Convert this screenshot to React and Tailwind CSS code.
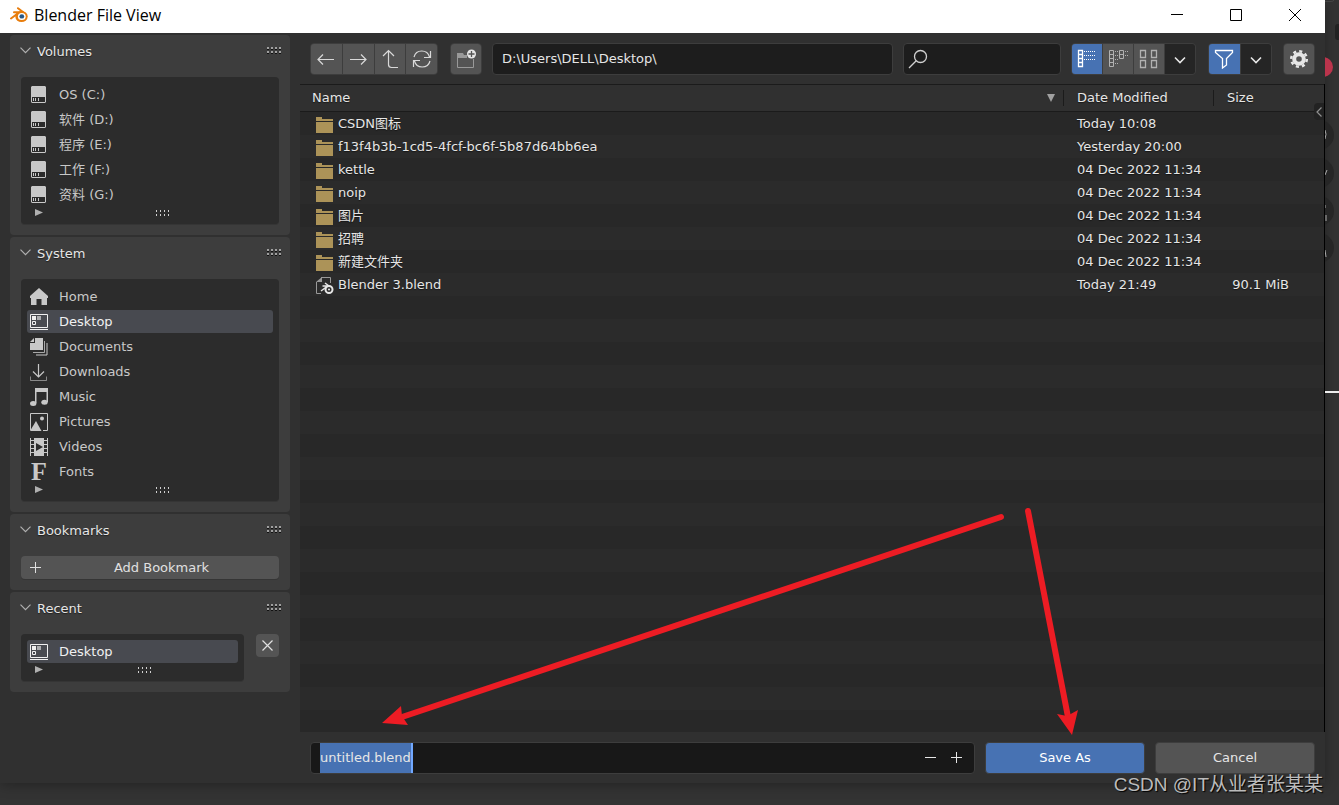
import { useState } from 'react'

const volumes = ['OS (C:)', '软件 (D:)', '程序 (E:)', '工作 (F:)', '资料 (G:)']

const files = [
  { name: 'CSDN图标', date: 'Today 10:08' },
  { name: 'f13f4b3b-1cd5-4fcf-bc6f-5b87d64bb6ea', date: 'Yesterday 20:00' },
  { name: 'kettle', date: '04 Dec 2022 11:34' },
  { name: 'noip', date: '04 Dec 2022 11:34' },
  { name: '图片', date: '04 Dec 2022 11:34' },
  { name: '招聘', date: '04 Dec 2022 11:34' },
  { name: '新建文件夹', date: '04 Dec 2022 11:34' },
  { name: 'Blender 3.blend', date: 'Today 21:49', size: '90.1 MiB', blend: true },
]

function Icon({ children }) {
  return (
    <svg width="18" height="18" viewBox="0 0 18 18" fill="none" stroke="currentColor" className="shrink-0" aria-hidden="true">
      {children}
    </svg>
  )
}

const DriveIcon = () => (
  <Icon>
    <path d="M2 0h13l1 1v15l-1 1H2l-1-1V1z" fill="currentColor" stroke="none" />
    <path d="M2 11h13v5H2z" fill="#2b2b2b" stroke="none" />
    <path d="M3.500 12v3M5.500 12v3M8.500 12v3" />
  </Icon>
)

const HomeIcon = () => (
  <Icon>
    <path d="M9 0 0 8v2h1v7h5.500v-6h5v6H17v-7h1V8z" fill="currentColor" stroke="none" />
  </Icon>
)

const DesktopIcon = () => (
  <Icon>
    <path d="M0.500 1.500h17v13h-17z" />
    <path d="M0 16.500h18" />
    <path d="M2 3h4v4H2z" fill="currentColor" stroke="none" />
    <path d="M7 3h4v4H7z" fill="currentColor" stroke="none" opacity="0.6" />
    <path d="M2.500 8.500h3v3h-3z" />
  </Icon>
)

const DocumentsIcon = () => (
  <Icon>
    <path d="M5 0h8v12H0V5h5zM4 0v4H0z" fill="currentColor" stroke="none" />
    <path d="M14.500 3v11.500H3" opacity="0.8" />
    <path d="M17 5v12H6" />
  </Icon>
)

const DownloadsIcon = () => (
  <Icon>
    <path d="M8.500 1v13M3 8.500l5.500 5.500 5.500-5.500" strokeWidth="1.2" />
    <path d="M0.500 13.500v4h16v-4" opacity="0.6" />
  </Icon>
)

const MusicIcon = () => (
  <Icon>
    <path d="M5 0h13v14h-1.500V4H6.500v11H5z" fill="currentColor" stroke="none" />
    <ellipse cx="3.200" cy="15.500" rx="3.200" ry="2.500" fill="currentColor" stroke="none" />
    <ellipse cx="14.500" cy="14.300" rx="3.200" ry="2.500" fill="currentColor" stroke="none" />
  </Icon>
)

const PicturesIcon = () => (
  <Icon>
    <path d="M0.500 17V0.500h17v17H13" />
    <path d="M6 8l5.500 10H0z" fill="currentColor" stroke="none" />
    <circle cx="12" cy="5.500" r="2" fill="currentColor" stroke="none" />
  </Icon>
)

const VideosIcon = () => (
  <Icon>
    <path d="M4 0h10v18H4z" fill="currentColor" stroke="none" />
    <path d="M0.500 0v18M17.500 0v18M0 2.500h4M0 6.500h4M0 10.500h4M0 14.500h4M14 2.500h4M14 6.500h4M14 10.500h4M14 14.500h4" />
    <path d="M6 5l7 4-7 4z" fill="#2b2b2b" stroke="none" />
  </Icon>
)

const FontsIcon = () => (
  <span className="w-[18px] shrink-0 text-center font-['Liberation_Serif',serif] text-[26px] leading-[18px] font-bold" aria-hidden="true">F</span>
)

const systemItems = [
  { name: 'Home', icon: HomeIcon },
  { name: 'Desktop', icon: DesktopIcon },
  { name: 'Documents', icon: DocumentsIcon },
  { name: 'Downloads', icon: DownloadsIcon },
  { name: 'Music', icon: MusicIcon },
  { name: 'Pictures', icon: PicturesIcon },
  { name: 'Videos', icon: VideosIcon },
  { name: 'Fonts', icon: FontsIcon },
]

function BlenderLogo() {
  return (
    <svg width="18" height="16" viewBox="0 0 18 16" aria-hidden="true">
      <path d="M8 1.200 13 5M4 5.200h8M1 11.500 9 5.500" stroke="#e87d0d" strokeWidth="2" fill="none" strokeLinecap="round" />
      <ellipse cx="11.500" cy="9.500" rx="6.200" ry="5.600" fill="#e87d0d" />
      <ellipse cx="11.800" cy="9.400" rx="3.900" ry="3.500" fill="#fff" />
      <ellipse cx="11.800" cy="9.400" rx="2.400" ry="2.200" fill="#265787" />
    </svg>
  )
}

function FolderIcon() {
  return (
    <svg width="18" height="18" viewBox="0 0 18 18" fill="#ac9358" className="shrink-0" aria-hidden="true">
      <path d="M0 2h6v2h11v2H0zM0 7h17v11H0z" />
    </svg>
  )
}

function BlendFileIcon() {
  return (
    <svg width="18" height="18" viewBox="0 0 18 18" fill="none" className="shrink-0" aria-hidden="true">
      <path d="M6 1v5H0z" fill="#999" />
      <path d="M5 1.500h9.500V7M0.500 6v11.500H5" stroke="#999" />
      <path d="M9 7l4 3M6.500 10h6M5 15l6-4.500" stroke="#e6e6e6" strokeWidth="1.500" />
      <circle cx="13" cy="13.500" r="3.500" stroke="#e6e6e6" strokeWidth="2" />
      <circle cx="13" cy="13.500" r="1" fill="#e6e6e6" />
    </svg>
  )
}

// 4x2 drag handle
function Grip() {
  return (
    <svg width="15" height="7" viewBox="0 0 15 7" aria-hidden="true">
      <path d="M0 2h2v1H0zM4 2h2v1H4zM8 2h2v1H8zM12 2h2v1h-2zM0 6h2v1H0zM4 6h2v1H4zM8 6h2v1H8zM12 6h2v1h-2z" fill="#111" />
      <path d="M0 0h2v2H0zM4 0h2v2H4zM8 0h2v2H8zM12 0h2v2h-2zM0 4h2v2H0zM4 4h2v2H4zM8 4h2v2H8zM12 4h2v2h-2z" fill="#a0a0a0" />
    </svg>
  )
}

function SmallGrip() {
  return (
    <svg width="13" height="6" viewBox="0 0 13 6" fill="#d0d0d0" aria-hidden="true">
      <path d="M0 0h1v2H0zM4 0h1v2H4zM8 0h1v2H8zM12 0h1v2h-1zM0 4h1v2H0zM4 4h1v2H4zM8 4h1v2H8zM12 4h1v2h-1z" />
    </svg>
  )
}

function Panel({ title, children }) {
  return (
    <section className="rounded bg-[#3d3d3d] px-[11px] pb-[11px]">
      <header className="-mr-[3px] -ml-px flex h-[42px] items-start justify-between pt-[7px]">
        <h2 className="flex h-5 items-center gap-1.5 text-[#e6e6e6]">
          <svg width="11" height="7" viewBox="0 0 11 7" fill="none" stroke="#b0b0b0" strokeWidth="1.2" className="mb-1" aria-hidden="true">
            <path d="M0.500 0.700 5.500 5.700l5-5" />
          </svg>
          {title}
        </h2>
        <span className="pt-[5px]"><Grip /></span>
      </header>
      {children}
    </section>
  )
}

function List({ children }) {
  return (
    <div className="flex-1 rounded bg-[#2c2c2c] px-1.5 pt-1.5 shadow-[0_1px_0_#353535]">
      <ul className="flex flex-col gap-0.5">{children}</ul>
      <div className="flex h-[18px] items-start gap-2 pt-[3px] pl-2">
        <svg width="8" height="7" viewBox="0 0 8 7" fill="#b0b0b0" aria-hidden="true">
          <path d="M0 0l8 3.500-8 3.500z" />
        </svg>
        <span className="flex flex-1 justify-center pt-px"><SmallGrip /></span>
      </div>
    </div>
  )
}

function ListItem({ icon: ItemIcon, name, active, onClick }) {
  return (
    <li>
      <button
        type="button"
        onClick={onClick}
        className={
          active
            ? 'flex h-[23px] w-full items-center gap-[11px] rounded-[3px] bg-[#484a50] pl-[3px] text-[#f0f0f0]'
            : 'flex h-[23px] w-full items-center gap-[11px] rounded-[3px] pl-[3px] text-[#c8c8c8]'
        }
      >
        <ItemIcon />
        {name}
      </button>
    </li>
  )
}

function Sidebar() {
  const [place, setPlace] = useState('Desktop')

  return (
    <aside className="flex w-[300px] shrink-0 flex-col gap-0.5 px-2.5 pt-0.5">
      <Panel title="Volumes">
        <List>
          {volumes.map((v) => (
            <ListItem key={v} name={v} icon={DriveIcon} active={v === place} onClick={() => setPlace(v)} />
          ))}
        </List>
      </Panel>
      <Panel title="System">
        <List>
          {systemItems.map((s) => (
            <ListItem key={s.name} name={s.name} icon={s.icon} active={s.name === place} onClick={() => setPlace(s.name)} />
          ))}
        </List>
      </Panel>
      <Panel title="Bookmarks">
        <button type="button" className="flex h-[23px] w-full items-center gap-[3px] rounded bg-[#545454] pl-2 text-[#e0e0e0] shadow-[0_1px_0_#353535]">
          <svg width="12" height="12" viewBox="0 0 12 12" stroke="currentColor" aria-hidden="true">
            <path d="M6.500 0v11M1 5.500h11" />
          </svg>
          <span className="flex-1 text-center">Add Bookmark</span>
        </button>
      </Panel>
      <Panel title="Recent">
        <div className="flex items-start gap-3">
          <List>
            <ListItem name="Desktop" icon={DesktopIcon} active />
          </List>
          <button type="button" aria-label="Clear recent" className="flex size-[23px] items-center justify-center rounded bg-[#545454] text-[#e0e0e0]">
            <svg width="11" height="11" viewBox="0 0 11 11" stroke="currentColor" strokeWidth="1.2" aria-hidden="true">
              <path d="M0.500 0.500l10 10M10.500 0.500l-10 10" />
            </svg>
          </button>
        </div>
      </Panel>
    </aside>
  )
}

function ToolButton({ label, active, dark, children }) {
  const tone = active ? 'bg-[#4772b3] text-white' : dark ? 'bg-[#252525] text-[#e6e6e6]' : 'bg-[#545454] text-[#d9d9d9]'
  return (
    <button type="button" aria-label={label} className={`flex h-[30px] flex-1 items-center justify-center ${tone}`}>
      <svg width="20" height="20" viewBox="0 0 20 20" fill="none" stroke="currentColor" aria-hidden="true">
        {children}
      </svg>
    </button>
  )
}

function Toolbar() {
  const [path, setPath] = useState('D:\\Users\\DELL\\Desktop\\')
  const [query, setQuery] = useState('')

  return (
    <div className="flex h-[51px] items-center px-2.5">
      <div className="flex w-32 gap-px overflow-hidden rounded border border-[#3d3d3d] bg-[#3d3d3d]">
        <ToolButton label="Back"><path d="M18 10.500H2M7 5.500l-5 5 5 5" strokeWidth="1.200" /></ToolButton>
        <ToolButton label="Forward"><path d="M2 10.500h16M13 5.500l5 5-5 5" strokeWidth="1.200" /></ToolButton>
        <ToolButton label="Parent directory"><path d="M3 7l5.500-5.500L14 7M8.500 2v13.500q0 3 3 3H18" strokeWidth="1.200" /></ToolButton>
        <ToolButton label="Refresh">
          <path d="M2 8a8 8 0 0 1 15.500 0M18.500 2v6.500H12M18 12a8 8 0 0 1-15.500 0M1.500 18v-6.500H8" strokeWidth="1.200" />
        </ToolButton>
      </div>
      <div className="ml-3 flex w-8 overflow-hidden rounded border border-[#3d3d3d]">
        <ToolButton label="New folder">
          <path d="M1 4h6l1 2h3v3H1z" fill="#999" stroke="none" />
          <path d="M1.500 9v9.500h16V10" stroke="#999" />
          <circle cx="15.500" cy="5" r="4.500" fill="#e6e6e6" stroke="none" />
          <path d="M15.500 2v6M12.500 5h6" stroke="#545454" strokeWidth="1.300" />
        </ToolButton>
      </div>
      <input
        type="text"
        aria-label="Directory path"
        value={path}
        onChange={(e) => setPath(e.target.value)}
        className="ml-2.5 h-8 min-w-0 flex-1 rounded border border-[#3d3d3d] bg-[#1d1d1d] px-[9px] text-[#e6e6e6] outline-none"
      />
      <label className="ml-2.5 flex h-8 w-[158px] items-center rounded border border-[#3d3d3d] bg-[#1d1d1d] pl-1">
        <svg width="20" height="20" viewBox="0 0 20 20" fill="none" stroke="#d0d0d0" strokeWidth="1.300" aria-hidden="true">
          <circle cx="12.500" cy="7.500" r="6" />
          <path d="M8.200 11.800 1 19" />
        </svg>
        <input
          type="text"
          aria-label="Search"
          value={query}
          onChange={(e) => setQuery(e.target.value)}
          className="min-w-0 flex-1 px-1 text-[#e6e6e6] outline-none"
        />
      </label>
      <div className="ml-2.5 flex w-[125px] gap-px overflow-hidden rounded border border-[#3d3d3d] bg-[#3d3d3d]">
        <ToolButton label="Vertical list" active>
          <path d="M1.500 1.500h4v16h-4zM1.500 5.500h4M1.500 9.500h4M1.500 13.500h4" strokeWidth="1.300" />
          <path d="M7 2.500h12M7 6.500h12M7 10.500h12" strokeDasharray="1 1" />
        </ToolButton>
        <ToolButton label="Horizontal list">
          <g opacity="0.7">
            <path d="M1.500 1.500h4v16h-4zM1.500 5.500h4M1.500 9.500h4M1.500 13.500h4M11.500 1.500h4v8h-4zM11.500 5.500h4" />
            <path d="M7 2.500h3M7 6.500h3M7 10.500h3M7 14.500h3M17 2.500h3M17 6.500h3" strokeDasharray="1 1" />
          </g>
        </ToolButton>
        <ToolButton label="Thumbnails">
          <path d="M1.500 1.500h5v7h-5zM12.500 1.500h5v7h-5zM1.500 11.500h5v7h-5zM12.500 11.500h5v7h-5z" strokeWidth="1.300" opacity="0.7" />
        </ToolButton>
        <ToolButton label="Display settings" dark><path d="M5 8.500l5 5 5-5" strokeWidth="1.600" /></ToolButton>
      </div>
      <div className="ml-3 flex w-16 gap-px overflow-hidden rounded border border-[#3d3d3d] bg-[#3d3d3d]">
        <ToolButton label="Filter" active><path d="M1.500 1.500h17v2l-6 6v6.500l-4 3v-9.500l-7-6z" strokeWidth="1.300" /></ToolButton>
        <ToolButton label="Filter settings" dark><path d="M5 8.500l5 5 5-5" strokeWidth="1.600" /></ToolButton>
      </div>
      <div className="ml-[11px] flex w-8 overflow-hidden rounded border border-[#3d3d3d]">
        <ToolButton label="Options">
          <g stroke="#e6e6e6">
            <circle cx="10" cy="10" r="4.800" strokeWidth="4" />
            <circle cx="10" cy="10" r="7.800" strokeWidth="2.500" strokeDasharray="3.060 3.060" />
          </g>
        </ToolButton>
      </div>
    </div>
  )
}

function FileTable() {
  return (
    <div className="relative flex-1 border-r border-black bg-[repeating-linear-gradient(#282828_0_23px,#2b2b2b_23px_46px)] bg-[position:0_28px]">
      <table className="w-full table-fixed border-collapse text-left text-[#e6e6e6]">
        <colgroup>
          <col />
          <col className="w-[150px]" />
          <col className="w-[111px]" />
        </colgroup>
        <thead className="border-y border-[#1b1b1b] bg-[#303030]">
          <tr className="h-[27px]">
            <th className="pl-3 font-normal">
              <span className="flex items-center justify-between pr-2">
                Name
                <svg width="8" height="8" viewBox="0 0 8 8" fill="#a0a0a0" aria-hidden="true"><path d="M0 0h8L4 8z" /></svg>
              </span>
            </th>
            <th className="font-normal"><span className="block h-4 border-l border-[#1b1b1b] pl-[13px] leading-4">Date Modified</span></th>
            <th className="font-normal"><span className="block h-4 border-l border-[#1b1b1b] pl-[13px] leading-4">Size</span></th>
          </tr>
        </thead>
        <tbody>
          {files.map((f) => (
            <tr key={f.name} className="h-[23px]">
              <td className="pl-4">
                <span className="flex h-[23px] items-center gap-1">
                  {f.blend ? <BlendFileIcon /> : <FolderIcon />}
                  {f.name}
                </span>
              </td>
              <td className="pl-3.5">{f.date}</td>
              <td className="pr-[35px] text-right">{f.size}</td>
            </tr>
          ))}
        </tbody>
      </table>
      <button type="button" aria-label="Show options" className="absolute top-[19px] right-0 flex h-[17px] w-2.5 items-center justify-center rounded-l bg-[#222]">
        <svg width="6" height="10" viewBox="0 0 6 10" fill="none" stroke="#909090" strokeWidth="1.200" aria-hidden="true"><path d="M5.500 0.500 1 5l4.500 4.500" /></svg>
      </button>
    </div>
  )
}

function SaveBar() {
  const [name, setName] = useState('untitled.blend')

  return (
    <div className="flex h-[51px] items-center gap-2.5 px-2.5 text-[#e6e6e6]">
      <div className="flex h-8 flex-1 items-center rounded border border-[#3d3d3d] bg-[#181818] pl-[9px]">
        <input
          type="text"
          aria-label="File name"
          value={name}
          onChange={(e) => setName(e.target.value)}
          className="field-sizing-content h-full border-r-2 border-[#71a8ff] bg-[#4772b3] outline-none"
        />
        <button type="button" aria-label="Decrement" className="ml-auto flex h-full w-[26px] items-center justify-center">
          <svg width="12" height="12" viewBox="0 0 12 12" stroke="currentColor" aria-hidden="true"><path d="M0 5.500h11" /></svg>
        </button>
        <button type="button" aria-label="Increment" className="mr-1 flex h-full w-[26px] items-center justify-center">
          <svg width="12" height="12" viewBox="0 0 12 12" stroke="currentColor" aria-hidden="true"><path d="M0 5.500h11M5.500 0v11" /></svg>
        </button>
      </div>
      <button type="button" className="h-8 w-40 rounded border border-[#3d3d3d] bg-[#4772b3] text-white">Save As</button>
      <button type="button" className="h-8 w-40 rounded border border-[#3d3d3d] bg-[#545454]">Cancel</button>
    </div>
  )
}

function TitleBar() {
  return (
    <div className="flex h-[33px] items-center bg-white pr-px pb-1 pl-2.5 text-black">
      <BlenderLogo />
      <h1 className="ml-1.5 flex-1 font-['Open_Sans',sans-serif] text-base">Blender File View</h1>
      <button type="button" aria-label="Minimize" className="flex h-full w-[59px] items-center justify-center">
        <svg width="12" height="12" viewBox="0 0 12 12" stroke="currentColor" aria-hidden="true"><path d="M0 5.500h12" /></svg>
      </button>
      <button type="button" aria-label="Maximize" className="flex h-full w-[59px] items-center justify-center">
        <svg width="12" height="12" viewBox="0 0 12 12" fill="none" stroke="currentColor" aria-hidden="true"><path d="M0.500 0.500h11v11H0.500z" /></svg>
      </button>
      <button type="button" aria-label="Close" className="flex h-full w-[59px] items-center justify-center">
        <svg width="12" height="12" viewBox="0 0 12 12" stroke="currentColor" aria-hidden="true"><path d="M0 0l12 12M12 0 0 12" /></svg>
      </button>
    </div>
  )
}

// Sliver of the main viewport behind the dialog
function Backdrop() {
  return (
    <svg width="14" height="400" viewBox="0 0 14 400" aria-hidden="true">
      <path d="M0 1.500h6q3 0 3-2" stroke="#444" fill="none" />
      <rect x="10" y="24" width="10" height="16" rx="3" fill="#222" />
      <circle cx="-2" cy="67" r="10" fill="#bb344c" />
      <g fill="#262626">
        <circle cx="-6" cy="135" r="15" />
        <circle cx="-6" cy="173" r="15" />
        <circle cx="-6" cy="211" r="15" />
        <circle cx="-6" cy="248" r="15" />
      </g>
      <path d="M0 130q2 4 0 9M0 175l2-5M0 205v3M1 215v6M0 250l1 7" stroke="#aaa" fill="none" />
      <path d="M0 392h14" stroke="#eee" strokeWidth="2" />
    </svg>
  )
}

export default function App() {
  return (
    <div className="relative flex min-h-screen bg-[#333] font-['DejaVu_Sans','Noto_Sans_CJK_SC',sans-serif] text-[13px]">
      <div className="mb-[22px] flex flex-1 flex-col bg-[#303030] shadow-[0_2px_12px_rgba(0,0,0,0.3)]">
        <TitleBar />
        <div className="flex flex-1 [text-shadow:0_1px_1px_rgba(0,0,0,0.5)]">
          <Sidebar />
          <main className="flex min-w-0 flex-1 flex-col">
            <Toolbar />
            <FileTable />
            <SaveBar />
          </main>
        </div>
      </div>
      <div className="w-3.5 shrink-0"><Backdrop /></div>

      <svg width="700" height="232" viewBox="380 505 700 232" fill="#ed1c24" className="pointer-events-none absolute right-[259px] bottom-[68px]" aria-hidden="true">
        <path d="M1001 517 402 717M1028 511l40 206" stroke="#ed1c24" strokeWidth="6" strokeLinecap="round" />
        <path d="M382 723 401 706 402 716 408 725zM1072 735 1057 714 1067 716 1078 710z" />
      </svg>
      <p className="absolute right-4 bottom-1.5 font-['Liberation_Sans','Noto_Sans_CJK_SC',sans-serif] text-[19px] leading-7 text-[#bbb] [text-shadow:1px_1px_1px_#000]">
        CSDN @IT从业者张某某
      </p>
    </div>
  )
}
